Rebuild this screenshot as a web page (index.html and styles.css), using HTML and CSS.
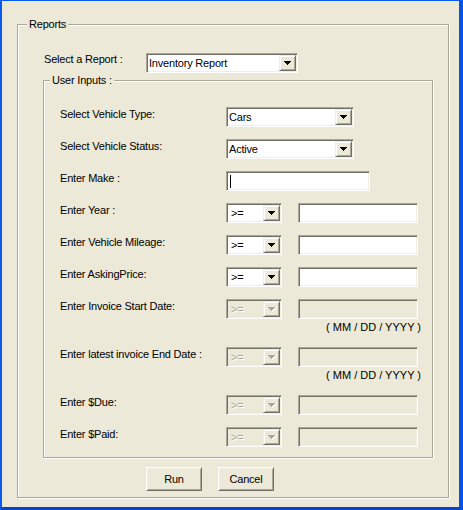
FILE: index.html
```html
<!DOCTYPE html>
<html>
<head>
<meta charset="utf-8">
<link rel="stylesheet" href="styles.css">
</head>
<body>
<div class="window">
  <div class="group outer">
    <div class="legend legend-outer">Reports</div>
    <div class="report-row">
      <span class="label report-label">Select a Report :</span>
      <div class="combo combo-report">
        <span class="combo-text">Inventory Report</span>
        <span class="drop"><svg width="7" height="4" viewBox="0 0 7 4"><path d="M0 0h7v1h-1v1h-1v1h-1v1h-1v-1h-1v-1h-1v-1h-1z" fill="#000"/></svg></span>
      </div>
    </div>
    <div class="group inner">
      <div class="legend legend-inner">User Inputs :</div>
      <div class="rows">
        <div class="row">
          <span class="label">Select Vehicle Type:</span>
          <div class="combo combo-mid">
            <span class="combo-text">Cars</span>
            <span class="drop"><svg width="7" height="4" viewBox="0 0 7 4"><path d="M0 0h7v1h-1v1h-1v1h-1v1h-1v-1h-1v-1h-1v-1h-1z" fill="#000"/></svg></span>
          </div>
        </div>
        <div class="row">
          <span class="label">Select Vehicle Status:</span>
          <div class="combo combo-mid">
            <span class="combo-text">Active</span>
            <span class="drop"><svg width="7" height="4" viewBox="0 0 7 4"><path d="M0 0h7v1h-1v1h-1v1h-1v1h-1v-1h-1v-1h-1v-1h-1z" fill="#000"/></svg></span>
          </div>
        </div>
        <div class="row">
          <span class="label">Enter Make :</span>
          <div class="field field-make"><span class="caret"></span></div>
        </div>
        <div class="row">
          <span class="label">Enter Year :</span>
          <div class="combo combo-small">
            <span class="combo-text op">&gt;=</span>
            <span class="drop"><svg width="7" height="4" viewBox="0 0 7 4"><path d="M0 0h7v1h-1v1h-1v1h-1v1h-1v-1h-1v-1h-1v-1h-1z" fill="#000"/></svg></span>
          </div>
          <div class="field field-value"></div>
        </div>
        <div class="row">
          <span class="label">Enter Vehicle Mileage:</span>
          <div class="combo combo-small">
            <span class="combo-text op">&gt;=</span>
            <span class="drop"><svg width="7" height="4" viewBox="0 0 7 4"><path d="M0 0h7v1h-1v1h-1v1h-1v1h-1v-1h-1v-1h-1v-1h-1z" fill="#000"/></svg></span>
          </div>
          <div class="field field-value"></div>
        </div>
        <div class="row">
          <span class="label">Enter AskingPrice:</span>
          <div class="combo combo-small">
            <span class="combo-text op">&gt;=</span>
            <span class="drop"><svg width="7" height="4" viewBox="0 0 7 4"><path d="M0 0h7v1h-1v1h-1v1h-1v1h-1v-1h-1v-1h-1v-1h-1z" fill="#000"/></svg></span>
          </div>
          <div class="field field-value"></div>
        </div>
        <div class="row-group">
          <div class="row">
            <span class="label">Enter Invoice Start Date:</span>
            <div class="combo combo-small disabled">
              <span class="combo-text op">&gt;=</span>
              <span class="drop"><svg width="8" height="5" viewBox="0 0 8 5"><path d="M1 1h7v1h-1v1h-1v1h-1v1h-1v-1h-1v-1h-1v-1h-1z" fill="#fff"/><path d="M0 0h7v1h-1v1h-1v1h-1v1h-1v-1h-1v-1h-1v-1h-1z" fill="#aca899"/></svg></span>
            </div>
            <div class="field field-value disabled"></div>
          </div>
          <div class="note">( MM / DD / YYYY )</div>
        </div>
        <div class="row-group">
          <div class="row">
            <span class="label">Enter latest invoice End Date :</span>
            <div class="combo combo-small disabled">
              <span class="combo-text op">&gt;=</span>
              <span class="drop"><svg width="8" height="5" viewBox="0 0 8 5"><path d="M1 1h7v1h-1v1h-1v1h-1v1h-1v-1h-1v-1h-1v-1h-1z" fill="#fff"/><path d="M0 0h7v1h-1v1h-1v1h-1v1h-1v-1h-1v-1h-1v-1h-1z" fill="#aca899"/></svg></span>
            </div>
            <div class="field field-value disabled"></div>
          </div>
          <div class="note">( MM / DD / YYYY )</div>
        </div>
        <div class="row">
          <span class="label">Enter $Due:</span>
          <div class="combo combo-small disabled">
            <span class="combo-text op">&gt;=</span>
            <span class="drop"><svg width="8" height="5" viewBox="0 0 8 5"><path d="M1 1h7v1h-1v1h-1v1h-1v1h-1v-1h-1v-1h-1v-1h-1z" fill="#fff"/><path d="M0 0h7v1h-1v1h-1v1h-1v1h-1v-1h-1v-1h-1v-1h-1z" fill="#aca899"/></svg></span>
          </div>
          <div class="field field-value disabled"></div>
        </div>
        <div class="row">
          <span class="label">Enter $Paid:</span>
          <div class="combo combo-small disabled">
            <span class="combo-text op">&gt;=</span>
            <span class="drop"><svg width="8" height="5" viewBox="0 0 8 5"><path d="M1 1h7v1h-1v1h-1v1h-1v1h-1v-1h-1v-1h-1v-1h-1z" fill="#fff"/><path d="M0 0h7v1h-1v1h-1v1h-1v1h-1v-1h-1v-1h-1v-1h-1z" fill="#aca899"/></svg></span>
          </div>
          <div class="field field-value disabled"></div>
        </div>
      </div>
    </div>
    <div class="buttons">
      <button class="btn" type="button">Run</button>
      <button class="btn" type="button">Cancel</button>
    </div>
  </div>
</div>
</body>
</html>
```

FILE: styles.css
```css
* {
  box-sizing: border-box;
}

body {
  margin: 0;
  font-family: "Liberation Sans", Arial, sans-serif;
  font-size: 11px;
  letter-spacing: -0.2px;
  color: #000;
  background: #ece9d8;
}

.window {
  width: 463px;
  height: 510px;
  background: #ece9d8;
  border-style: solid;
  border-width: 1px 4px 3px 2px;
  border-color: #0a5cec #0552e6 #0844cf #0a5ae8;
  overflow: hidden;
}

.group {
  border: 1px solid #aca899;
  box-shadow: inset 1px 1px 0 #fff, 1px 1px 0 #fff;
}

.outer {
  width: 432px;
  height: 474px;
  margin: 23px 0 0 15px;
}

.inner {
  width: 390px;
  height: 378px;
  margin: 7px 0 0 25px;
}

.legend {
  display: block;
  width: max-content;
  height: 13px;
  line-height: 13px;
  padding: 0 2px;
  margin-top: -7px;
  background: #ece9d8;
}

.legend-outer {
  margin-left: 9px;
}

.legend-inner {
  margin-left: 6px;
}

.label {
  display: block;
  line-height: 13px;
  white-space: nowrap;
}

.report-row {
  display: flex;
  height: 20px;
  margin-top: 22px;
  padding-left: 26px;
}

.report-label {
  width: 102px;
}

.rows {
  display: flex;
  flex-direction: column;
  gap: 12px;
  margin-top: 20px;
  padding-left: 16px;
}

.row {
  display: flex;
  height: 20px;
}

.row .label {
  width: 166px;
  padding-top: 1px;
}

.combo,
.field {
  height: 20px;
  border: 1px solid;
  border-color: #aca899 #fff #fff #aca899;
  box-shadow: inset 1px 1px 0 #716f64, inset -1px -1px 0 #f1efe2;
  background: #fff;
}

.combo {
  display: flex;
  padding: 1px;
}

.combo-report {
  width: 152px;
}

.combo-mid {
  width: 128px;
}

.combo-small {
  width: 56px;
}

.combo-text {
  flex: 1;
  padding-left: 1px;
  line-height: 16px;
  white-space: nowrap;
  overflow: hidden;
}

.combo-text.op {
  padding-left: 3px;
}

.drop {
  display: flex;
  align-items: center;
  justify-content: center;
  width: 17px;
  height: 16px;
  background: #ece9d8;
  border: 1px solid;
  border-color: #f1efe2 #716f64 #716f64 #f1efe2;
  box-shadow: inset 1px 1px 0 #fff, inset -1px -1px 0 #aca899;
}

.drop svg {
  display: block;
  shape-rendering: crispEdges;
}

.field-make {
  width: 144px;
  padding: 3px 0 0 3px;
}

.caret {
  display: block;
  width: 1px;
  height: 13px;
  background: #000;
}

.field-value {
  width: 120px;
  margin-left: 16px;
}

.disabled {
  background: #ece9d8;
}

.disabled .combo-text {
  color: #aca899;
  text-shadow: 1px 1px 0 #fff;
}

.note {
  width: 361px;
  height: 16px;
  line-height: 16px;
  text-align: right;
  letter-spacing: 0;
}

.buttons {
  display: flex;
  gap: 16px;
  margin-top: 9px;
  padding-left: 128px;
}

.btn {
  width: 56px;
  height: 24px;
  padding: 0;
  font-family: "Liberation Sans", Arial, sans-serif;
  font-size: 11px;
  letter-spacing: -0.2px;
  color: #000;
  background: #ece9d8;
  border: 1px solid;
  border-color: #fff #716f64 #716f64 #fff;
  box-shadow: inset 1px 1px 0 #f1efe2, inset -1px -1px 0 #aca899;
}
```
